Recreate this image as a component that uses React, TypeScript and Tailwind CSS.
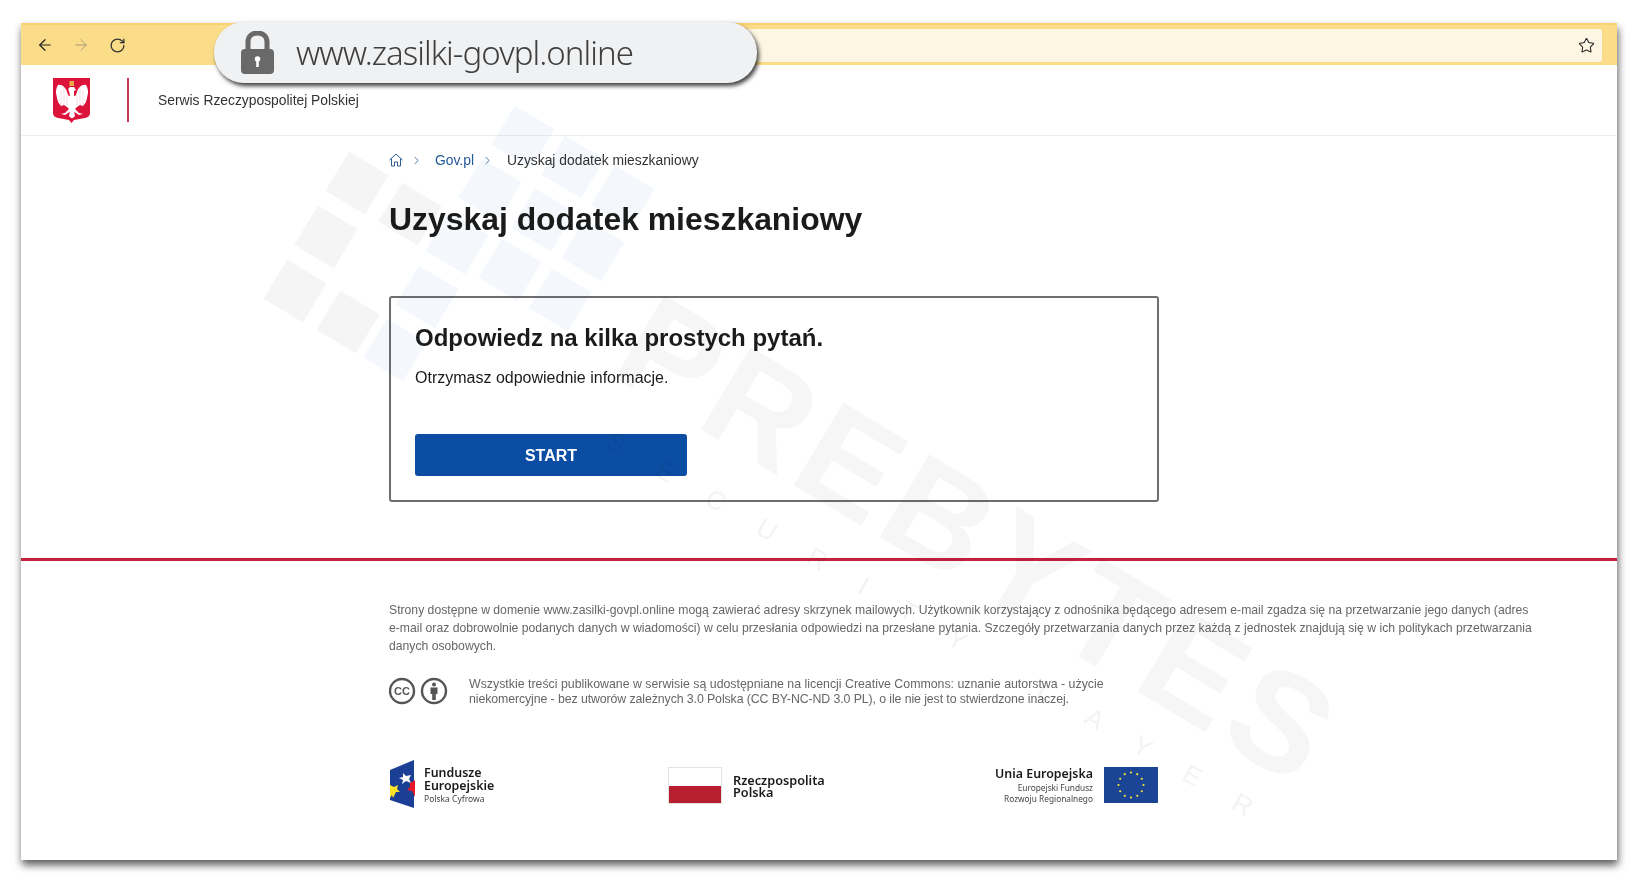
import { ArrowLeft, ArrowRight, RotateCw, Star, ChevronRight } from "lucide-react";

const U = [53, 31];
const V = [-31, 54];
const O = [357, 183];
const greys = [[0, 0], [1, 0], [0, 1], [0, 2], [1, 2]];
const blues: number[][] = [[523, 137], [490, 190], [457, 243], [427, 297], [395, 350], [573, 167], [510, 270], [560, 300], [593, 250], [623, 197], [543, 220]];

function Watermark() {
  return (
    <svg className="absolute left-0 top-0 w-[1640px] h-[884px] pointer-events-none mix-blend-multiply" viewBox="0 0 1640 884">
      {greys.map(([i, j]) => (
        <rect key={`g${i}${j}`} x={-23} y={-23} width={46} height={46} fill="#f5f5f5" transform={`translate(${O[0] + i * U[0] + j * V[0]} ${O[1] + i * U[1] + j * V[1]}) rotate(31)`} />
      ))}
      {blues.map(([x, y]) => (
        <rect key={`b${x}`} x={-23} y={-23} width={46} height={46} fill="#f4f8fd" transform={`translate(${x} ${y}) rotate(31)`} />
      ))}
      <g transform="translate(607 373) rotate(31)">
        <text x="0" y="0" fontFamily="'Liberation Sans', sans-serif" fontWeight="700" fontSize="140" letterSpacing="7" fill="#f6f6f6">PREBYTES</text>
      </g>
      <g transform="translate(604 446) rotate(30)">
        <text x="0" y="0" fontFamily="'Liberation Sans', sans-serif" fontSize="26" letterSpacing="40" fill="#f3f3f3">SECURITY LAYER</text>
      </g>
    </svg>
  );
}

function Eagle() {
  return (
    <svg width="37" height="45" viewBox="0 0 37 45" className="shrink-0">
      <path d="M0 0H37V35Q37 39 32 40L21 42L18.5 45L16 42L5 40Q0 39 0 35Z" fill="#dc143c" />
      <path d="M17 9C15 10 15 12 16 13L17 18C16 19 15 17 14 14C13 10 9 6 5 7C3 10 3 13 3 15L4 20L5 24L8 28L11 27L14 29L16 31L12 35L8 36L12 37L15 35L17 34L16 38L18 40L20 40L22 38L21 34L23 35L26 37L30 36L26 35L22 31L24 29L27 27L30 28L33 24L34 20L35 15C35 13 35 10 33 7C29 6 25 10 24 14C23 17 22 19 21 18L21 13L23 12L21 9Z" fill="#ffffff" />
      <path d="M8 12V26M11 10V27M14 16V27M30 12V26M27 10V27M24 16V27" stroke="#f3d4da" strokeWidth="0.8" />
      <path d="M16.5 3H21V8H16.5Z" fill="#f3a94a" />
    </svg>
  );
}

function Lock() {
  return (
    <svg width="33" height="43" viewBox="0 0 33 43">
      <path d="M7 20V11C7 5 11 2 16.5 2C22 2 26 5 26 11V20" fill="none" stroke="#696969" strokeWidth="5" />
      <rect x="0" y="18" width="33" height="25" rx="4" fill="#696969" />
      <circle cx="16.5" cy="28" r="2.8" fill="#ffffff" />
      <rect x="15.2" y="29" width="2.6" height="7" fill="#ffffff" />
    </svg>
  );
}

function CC() {
  return (
    <svg width="59" height="28" viewBox="0 0 59 28" className="shrink-0">
      <circle cx="13" cy="14" r="12" fill="none" stroke="#555555" strokeWidth="2.4" />
      <text x="13" y="18" textAnchor="middle" fontFamily="'Liberation Sans', sans-serif" fontWeight="700" fontSize="11" fill="#555555">CC</text>
      <circle cx="45" cy="14" r="12" fill="none" stroke="#555555" strokeWidth="2.4" />
      <circle cx="45" cy="7.5" r="2" fill="#555555" />
      <path d="M41.5 10.5H48.5V17H46.8V23H43.2V17H41.5Z" fill="#555555" />
    </svg>
  );
}

function FELogo() {
  return (
    <svg width="26" height="48" viewBox="0 0 26 48" className="shrink-0">
      <path d="M25 0V48L1 40V10Z" fill="#1b3f94" />
      <path d="M14 13L17 16L22 15L20 19L22 23L17 21L13 24L14 20L10 18L14 17Z" fill="#ffffff" />
      <path d="M1 25L5 27L9 25L8 29L11 32L7 32L4 38L3 35L1 38Z" fill="#fde428" />
      <path d="M26 20V37L23 31L18 30L21 27L21 23Z" fill="#e3162a" />
    </svg>
  );
}

function EUFlag() {
  const stars = Array.from({ length: 12 }, (_, i) => {
    const a = (i * Math.PI) / 6;
    return [27 + 12.5 * Math.sin(a), 18 - 12.5 * Math.cos(a)];
  });
  return (
    <svg width="54" height="36" viewBox="0 0 54 36" className="shrink-0">
      <rect width="54" height="36" fill="#1c4494" />
      {stars.map(([x, y], i) => (
        <circle key={i} cx={x} cy={y} r="1.1" fill="#f4e43a" />
      ))}
    </svg>
  );
}

export default function App() {
  return (
    <div className="relative w-[1640px] h-[884px] overflow-hidden bg-white pl-[21px] pt-[23px] font-['Liberation_Sans',sans-serif]">
      <div className="w-[1596px] h-[837px] bg-white shadow-[1px_5px_8px_rgba(0,0,0,0.65)]">
        <div className="h-[42px] bg-[#fbdd89] border-t-2 border-[#f8d272] flex items-center pl-[15px] pr-[15px]">
          <ArrowLeft size={18} strokeWidth={1.6} className="text-[#222222]" />
          <ArrowRight size={18} strokeWidth={1.3} className="text-[#a59a76] ml-[18px]" />
          <RotateCw size={17} strokeWidth={1.8} className="text-[#333333] ml-[19px]" />
          <div className="flex-1 h-[33px] ml-[150px] bg-[#fdf6e3] rounded-[3px] flex items-center justify-end pr-[7px]">
            <Star size={17} strokeWidth={1.5} className="text-[#222222]" />
          </div>
        </div>
        <header className="h-[71px] border-b border-[#eeeeee] flex pl-[32px] pt-[13px]">
          <Eagle />
          <div className="w-[2px] h-[44px] bg-[#c4394f] ml-[37px]" />
          <span className="ml-[29px] mt-[12px] text-[13.85px] leading-[20px] text-[#333333]">Serwis Rzeczypospolitej Polskiej</span>
        </header>
        <main className="pl-[368px]">
          <nav className="pt-[14px] h-[34px] flex items-center text-[13.85px] leading-[20px] text-[#333333]">
            <svg width="14" height="14" viewBox="0 0 14 14" fill="none" stroke="#2b5f94" strokeWidth="1" className="shrink-0">
              <path d="M0.5 7L7 1L13.5 7M2.5 5.5V13H5.5V9H8.5V13H11.5V5.5" />
            </svg>
            <ChevronRight size={13} strokeWidth={1.5} className="text-[#2b5f94] ml-[7px]" />
            <span className="text-[#1f5a96] ml-[12px]">Gov.pl</span>
            <ChevronRight size={13} strokeWidth={1.5} className="text-[#2b5f94] ml-[7px]" />
            <span className="ml-[13px]">Uzyskaj dodatek mieszkaniowy</span>
          </nav>
          <h1 className="mt-[29px] text-[31.9px] leading-[40px] font-bold text-[#1b1b1b]">Uzyskaj dodatek mieszkaniowy</h1>
          <section className="mt-[57px] w-[770px] h-[206px] border-2 border-[#6e6e6e] rounded-[3px] pl-[24px] pt-[25px]">
            <h2 className="text-[24px] leading-[30px] font-bold text-[#1b1b1b]">Odpowiedz na kilka prostych pytań.</h2>
            <p className="mt-[13px] text-[16px] leading-[24px] text-[#1b1b1b]">Otrzymasz odpowiednie informacje.</p>
            <button className="mt-[44px] w-[272px] h-[42px] pt-[2px] bg-[#0b4da2] rounded-[3px] text-white font-bold text-[16px]">START</button>
          </section>
        </main>
        <div className="mt-[56px] h-[3px] bg-[#c4213c]" />
        <footer className="pl-[368px] text-[#666666]">
          <p className="mt-[40px] text-[12.2px] leading-[18px] whitespace-nowrap">
            Strony dostępne w domenie www.zasilki-govpl.online mogą zawierać adresy skrzynek mailowych. Użytkownik korzystający z odnośnika będącego adresem e-mail zgadza się na przetwarzanie jego danych (adres<br />
            e-mail oraz dobrowolnie podanych danych w wiadomości) w celu przesłania odpowiedzi na przesłane pytania. Szczegóły przetwarzania danych przez każdą z jednostek znajdują się w ich politykach przetwarzania<br />
            danych osobowych.
          </p>
          <div className="mt-[22px] flex items-start">
            <CC />
            <p className="ml-[21px] text-[12.35px] leading-[15px] whitespace-nowrap">
              Wszystkie treści publikowane w serwisie są udostępniane na licencji Creative Commons: uznanie autorstwa - użycie<br />
              <span className="tracking-[-0.1px]">niekomercyjne - bez utworów zależnych 3.0 Polska (CC BY-NC-ND 3.0 PL), o ile nie jest to stwierdzone inaczej.</span>
            </p>
          </div>
          <div className="mt-[53px] w-[769px] h-[48px] flex text-[#1a1a1a] font-['Noto_Sans',sans-serif]">
            <div className="flex w-[279px]">
              <FELogo />
              <div className="ml-[9px] mt-[6px]">
                <div className="text-[12.4px] leading-[13px] font-semibold">Fundusze<br />Europejskie</div>
                <div className="text-[8.5px] leading-[12px] mt-[1px] text-[#444444] whitespace-nowrap">Polska Cyfrowa</div>
              </div>
            </div>
            <div className="flex flex-1 pt-[7px]">
              <div className="w-[54px] h-[37px] flex flex-col shrink-0 border border-[#e3e3e3]">
                <div className="h-[18px] bg-white" />
                <div className="flex-1 bg-[#b71e2e]" />
              </div>
              <div className="ml-[11px] mt-[7px] text-[12.7px] leading-[12px] font-semibold">Rzeczpospolita<br />Polska</div>
            </div>
            <div className="flex pt-[7px]">
              <div className="text-right mr-[11px] whitespace-nowrap">
                <div className="text-[12.4px] leading-[14px] font-semibold">Unia Europejska</div>
                <div className="text-[8.3px] leading-[11px] mt-[1px] text-[#444444]">Europejski Fundusz<br />Rozwoju Regionalnego</div>
              </div>
              <EUFlag />
            </div>
          </div>
        </footer>
      </div>
      <div className="absolute left-[214px] top-[22px] w-[543px] h-[61px] rounded-[30px] bg-[#f0f1f3] shadow-[2px_3px_4px_rgba(0,0,0,0.75)] flex items-center pl-[27px]">
        <Lock />
        <span className="ml-[22px] text-[33px] leading-[40px] text-[#3f3f3f] font-['Noto_Sans',sans-serif] font-light tracking-[-0.96px]">www.zasilki-govpl.online</span>
      </div>
      <Watermark />
    </div>
  );
}
